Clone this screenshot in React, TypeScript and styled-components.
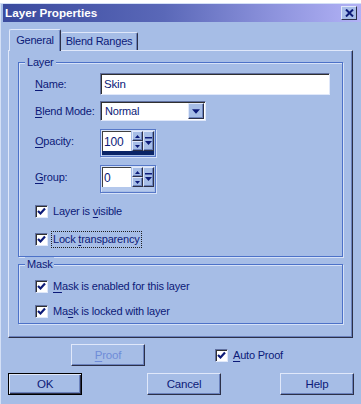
import React from "react";
import styled, { createGlobalStyle } from "styled-components";

const BG = "#a6bde6";
const NAVY = "#0c1a78";
const LIGHT = "#e0e8fa";
const DARK = "#2c3048";
const SHADE = "#6b82bd";

const GlobalStyle = createGlobalStyle`
  html, body { margin: 0; padding: 0; background: #ffffff; }
  body {
    font-family: "Liberation Sans", Arial, sans-serif;
    font-size: 11px;
    letter-spacing: -0.2px;
    color: ${NAVY};
    white-space: nowrap;
  }
  * { box-sizing: border-box; }
`;

const Window = styled.div`
  width: 361px;
  height: 401px;
  margin-top: 3px;
  background: ${BG};
  border-top: 1px solid #d4e0f6;
  border-left: 1px solid #d4e0f6;
  padding-left: 2px;
  display: flex;
  flex-direction: column;
  overflow: hidden;
`;

const TitleBar = styled.div`
  height: 18px;
  flex: none;
  display: flex;
  align-items: center;
  justify-content: space-between;
  padding: 0 4px 0 2px;
  background: linear-gradient(to right, #3a4a9e 0%, #5a68b8 45%, #8c92dc 75%, #b2b2f6 100%);
`;

const TitleText = styled.span`
  color: #ffffff;
  font-weight: bold;
  font-size: 11.7px;
  letter-spacing: 0;
  line-height: 18px;
`;

const CloseButton = styled.div`
  width: 16px;
  height: 14px;
  background: #a8bde8;
  border: 1px solid;
  border-color: ${LIGHT} ${DARK} ${DARK} ${LIGHT};
  display: flex;
  align-items: center;
  justify-content: center;
`;

const Content = styled.div`
  padding: 0 8px 0 5px;
  display: flex;
  flex-direction: column;
`;

const TabsRow = styled.div`
  margin-top: 7px;
  height: 21px;
  padding-left: 1px;
  display: flex;
  align-items: flex-end;
  position: relative;
  z-index: 1;
`;

const Tab = styled.div<{ $active?: boolean; $w: number }>`
  width: ${(p) => p.$w}px;
  height: ${(p) => (p.$active ? 22 : 18)}px;
  margin-bottom: ${(p) => (p.$active ? -1 : 0)}px;
  background: ${BG};
  border-top: 1px solid ${LIGHT};
  border-left: ${(p) => (p.$active ? `1px solid ${LIGHT}` : "none")};
  border-right: 1px solid ${DARK};
  border-radius: 2px 2px 0 0;
  box-shadow: inset -1px 0 0 ${SHADE};
  display: flex;
  align-items: ${(p) => (p.$active ? "flex-start" : "center")};
  justify-content: center;
  padding-top: ${(p) => (p.$active ? 3 : 0)}px;
  font-size: 11px;
  line-height: 15px;
`;

const Panel = styled.div`
  height: 288px;
  border: 1px solid;
  border-color: ${LIGHT} ${DARK} ${DARK} ${LIGHT};
  box-shadow: inset -1px -1px 0 ${SHADE};
  padding: 11px 9px 0 9px;
  display: flex;
  flex-direction: column;
`;

const GroupBox = styled.div<{ $mt?: number; $pt: number; $pb: number }>`
  position: relative;
  margin-top: ${(p) => p.$mt ?? 0}px;
  border: 1px solid #4d72c8;
  box-shadow: inset 1px 1px 0 #d6e2f8, 1px 1px 0 #d6e2f8;
  padding: ${(p) => p.$pt}px 8px ${(p) => p.$pb}px 16px;
  display: flex;
  flex-direction: column;
`;

const Legend = styled.span`
  position: absolute;
  top: -8px;
  left: 6px;
  padding: 0 2px;
  background: ${BG};
  line-height: 14px;
  font-size: 11px;
`;

const Row = styled.div<{ $mt?: number; $h: number }>`
  margin-top: ${(p) => p.$mt ?? 0}px;
  height: ${(p) => p.$h}px;
  display: flex;
  align-items: ${(p) => (p.$h > 24 ? "flex-start" : "center")};
`;

const FieldLabel = styled.span<{ $top?: number }>`
  width: 65px;
  flex: none;
  margin-top: ${(p) => p.$top ?? 0}px;
  line-height: 16px;
  font-size: 11px;
`;

const U = styled.span`
  text-decoration: underline;
  text-underline-offset: 2px;
`;

const TextInput = styled.div`
  width: 230px;
  height: 22px;
  background: #ffffff;
  border: 1px solid;
  border-color: #6070a0 ${LIGHT} ${LIGHT} #6070a0;
  box-shadow: inset 1px 1px 0 #303030;
  padding: 0 3px;
  display: flex;
  align-items: center;
  font-size: 11.5px;
`;

const Select = styled.div`
  width: 106px;
  height: 20px;
  background: #ffffff;
  border: 1px solid;
  border-color: #6070a0 ${LIGHT} ${LIGHT} #6070a0;
  box-shadow: inset 1px 1px 0 #303030;
  padding: 1px 1px 1px 4px;
  display: flex;
  align-items: center;
  justify-content: space-between;
  font-size: 11px;
`;

const SmallButton = styled.div<{ $w: number; $h: number }>`
  width: ${(p) => p.$w}px;
  height: ${(p) => p.$h}px;
  background: ${BG};
  border: 1px solid;
  border-color: ${LIGHT} ${DARK} ${DARK} ${LIGHT};
  box-shadow: inset -1px -1px 0 ${SHADE};
  display: flex;
  align-items: center;
  justify-content: center;
  flex: none;
`;

const SpinFrame = styled.div`
  width: 56px;
  height: 28px;
  border: 1px solid #5778c8;
  box-shadow: 1px 1px 0 #d6e2f8, inset 1px 1px 0 #d6e2f8;
  padding: 1px;
  display: grid;
  grid-template-columns: 29px 12px 11px;
  grid-template-rows: 20px 4px;
`;

const SpinField = styled.div`
  background: #ffffff;
  border-top: 1px solid #404040;
  border-left: 1px solid #404040;
  padding: 0 1px;
  display: flex;
  align-items: center;
  font-size: 12px;
`;

const SpinCol = styled.div`
  display: flex;
  flex-direction: column;
  padding-left: 1px;
`;

const Bar = styled.div`
  grid-column: 1 / span 3;
  background: #b4c8ec;
  display: flex;
`;

const BarFill = styled.div`
  background: #0a2466;
  height: 100%;
`;

const CheckRow = styled.div<{ $mt?: number; $ml?: number }>`
  margin-top: ${(p) => p.$mt ?? 0}px;
  margin-left: ${(p) => p.$ml ?? 0}px;
  height: 13px;
  display: flex;
  align-items: center;
`;

const Box = styled.div`
  width: 13px;
  height: 13px;
  flex: none;
  background: #ffffff;
  border: 1px solid;
  border-color: #6070a0 ${LIGHT} ${LIGHT} #6070a0;
  box-shadow: inset 1px 1px 0 #303030;
  display: flex;
  align-items: center;
  justify-content: center;
`;

const CheckText = styled.span<{ $focus?: boolean }>`
  margin-left: 3px;
  padding: 0 1px;
  line-height: 15px;
  font-size: 11px;
  border: 1px dotted ${(p) => (p.$focus ? "#202020" : "transparent")};
`;

const ActionRow = styled.div<{ $mt: number }>`
  margin-top: ${(p) => p.$mt}px;
  height: 22px;
  display: flex;
  align-items: center;
`;

const Button = styled.div<{ $ml?: number; $default?: boolean; $disabled?: boolean }>`
  width: 74px;
  height: 22px;
  margin-left: ${(p) => p.$ml ?? 0}px;
  flex: none;
  background: ${BG};
  border: 1px solid;
  border-color: ${(p) => (p.$default ? "#000 #000 #000 #000" : `${LIGHT} ${DARK} ${DARK} ${LIGHT}`)};
  box-shadow: ${(p) =>
    p.$default
      ? `inset 1px 1px 0 ${LIGHT}, inset -1px -1px 0 ${DARK}, inset -2px -2px 0 ${SHADE}`
      : `inset -1px -1px 0 ${SHADE}`};
  color: ${(p) => (p.$disabled ? "#6f8cd8" : NAVY)};
  display: flex;
  align-items: center;
  justify-content: center;
  font-size: 11.5px;
`;

const Check = () => (
  <svg width="9" height="9" viewBox="0 0 9 9">
    <polyline points="1,4 3.5,6.5 8,1.5" fill="none" stroke={NAVY} strokeWidth="2.2" />
  </svg>
);

const Checkbox = ({
  children,
  focus,
  mt,
  ml,
}: {
  children: React.ReactNode;
  focus?: boolean;
  mt?: number;
  ml?: number;
}) => (
  <CheckRow $mt={mt} $ml={ml}>
    <Box>
      <Check />
    </Box>
    <CheckText $focus={focus}>{children}</CheckText>
  </CheckRow>
);

const DownTri = ({ w = 9 }: { w?: number }) => (
  <svg width={w} height="5" viewBox="0 0 9 5">
    <polygon points="0,0 9,0 4.5,5" fill={NAVY} />
  </svg>
);

const Spin = ({ value, fill }: { value: string; fill: number }) => (
  <SpinFrame>
    <SpinField>{value}</SpinField>
    <SpinCol>
      <SmallButton $w={11} $h={10}>
        <svg width="5" height="3" viewBox="0 0 5 3">
          <polygon points="0,3 5,3 2.5,0" fill={NAVY} />
        </svg>
      </SmallButton>
      <SmallButton $w={11} $h={10}>
        <svg width="5" height="3" viewBox="0 0 5 3">
          <polygon points="0,0 5,0 2.5,3" fill={NAVY} />
        </svg>
      </SmallButton>
    </SpinCol>
    <SmallButton $w={11} $h={20}>
      <svg width="7" height="9" viewBox="0 0 7 9">
        <rect x="0" y="0" width="7" height="1.5" fill={NAVY} />
        <polygon points="0,4 7,4 3.5,8" fill={NAVY} />
      </svg>
    </SmallButton>
    <Bar>
      <BarFill style={{ width: `${fill}%` }} />
    </Bar>
  </SpinFrame>
);

export default function App() {
  return (
    <>
      <GlobalStyle />
      <Window>
        <TitleBar>
          <TitleText>Layer Properties</TitleText>
          <CloseButton>
            <svg width="9" height="8" viewBox="0 0 9 8">
              <path d="M1 0.5 L8 7.5 M8 0.5 L1 7.5" stroke={NAVY} strokeWidth="2" />
            </svg>
          </CloseButton>
        </TitleBar>
        <Content>
          <TabsRow>
            <Tab $active $w={52}>General</Tab>
            <Tab $w={77}>Blend Ranges</Tab>
          </TabsRow>
          <Panel>
            <GroupBox $pt={10} $pb={10}>
              <Legend>Layer</Legend>
              <Row $h={22}>
                <FieldLabel>
                  <U>N</U>ame:
                </FieldLabel>
                <TextInput>Skin</TextInput>
              </Row>
              <Row $mt={6} $h={20}>
                <FieldLabel>
                  <U>B</U>lend Mode:
                </FieldLabel>
                <Select>
                  <span>Normal</span>
                  <SmallButton $w={16} $h={16}>
                    <DownTri w={8} />
                  </SmallButton>
                </Select>
              </Row>
              <Row $mt={8} $h={28}>
                <FieldLabel $top={4}>
                  <U>O</U>pacity:
                </FieldLabel>
                <Spin value="100" fill={100} />
              </Row>
              <Row $mt={8} $h={28}>
                <FieldLabel $top={4}>
                  <U>G</U>roup:
                </FieldLabel>
                <Spin value="0" fill={0} />
              </Row>
              <Checkbox mt={12}>
                Layer is <U>v</U>isible
              </Checkbox>
              <Checkbox mt={15} focus>
                Lock <U>t</U>ransparency
              </Checkbox>
            </GroupBox>
            <GroupBox $mt={7} $pt={15} $pb={5}>
              <Legend>Mask</Legend>
              <Checkbox>
                <U>M</U>ask is enabled for this layer
              </Checkbox>
              <Checkbox mt={12}>
                Ma<U>s</U>k is locked with layer
              </Checkbox>
            </GroupBox>
          </Panel>
          <ActionRow $mt={6}>
            <Button $ml={63} $disabled>
              <U>P</U>roof
            </Button>
            <Checkbox ml={70}>
              <U>A</U>uto Proof
            </Checkbox>
          </ActionRow>
          <ActionRow $mt={7}>
            <Button $default>OK</Button>
            <Button $ml={65}>Cancel</Button>
            <Button $ml={59}>Help</Button>
          </ActionRow>
        </Content>
      </Window>
    </>
  );
}
